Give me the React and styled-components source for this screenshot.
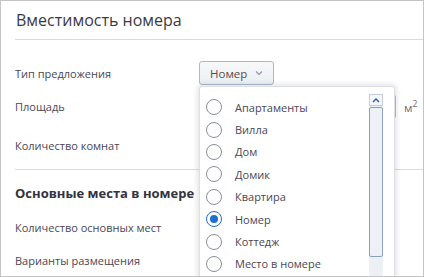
import React from "react";
import styled, { createGlobalStyle } from "styled-components";

const Global = createGlobalStyle`
  html, body { margin: 0; padding: 0; background: #fff; }
  body { font-family: "Open Sans", "Noto Sans", sans-serif; }
`;

const Frame = styled.div`
  position: relative;
  width: 424px;
  height: 277px;
  box-sizing: border-box;
  border: 1px solid #c4c4c4;
  overflow: hidden;
  background: #fff;
`;

const Header = styled.div`
  margin-left: 14px;
  height: 38px;
  display: flex;
  align-items: center;
  border-bottom: 1px solid #d3dbe3;
`;

const Title = styled.h1`
  margin: 0;
  padding-left: 1px;
  font-size: 16px;
  font-weight: 400;
  color: #3a3a44;
`;

const Body = styled.div`
  display: flex;
  flex-direction: column;
  padding-left: 14px;
  padding-top: 21px;
`;

const Row = styled.div`
  display: flex;
  align-items: center;
  box-sizing: border-box;
  height: ${(p) => p.$h}px;
  flex: none;
`;

const Label = styled.div`
  width: 184px;
  flex: none;
  font-size: 11px;
  color: #4a4656;
`;

const SelectBtn = styled.button`
  display: flex;
  align-items: center;
  gap: 8px;
  height: 24px;
  box-sizing: border-box;
  padding: 0 10px 0 10px;
  border: 1px solid #aab8cc;
  border-radius: 3px;
  background: linear-gradient(#f7f8fa, #eceff3);
  font-family: inherit;
  font-size: 11.5px;
  color: #5a4a44;
`;

const Input = styled.div`
  width: 197px;
  height: 25px;
  box-sizing: border-box;
  border: 1px solid #b8bfc8;
  border-radius: 3px;
  background: #fff;
`;

const Unit = styled.span`
  margin-left: 8px;
  font-size: 11.5px;
  color: #6a6a78;
  sup { font-size: 8.5px; }
`;

const Divider = styled.div`
  height: 1px;
  margin-top: 6px;
  background: #d3dbe3;
  flex: none;
`;

const Section = styled.div`
  font-size: 13px;
  font-weight: 700;
  color: #333340;
`;

const Dropdown = styled.div`
  position: absolute;
  left: 198px;
  top: 85px;
  width: 196px;
  height: 210px;
  box-sizing: border-box;
  background: #fff;
  border: 1px solid #dcdfe4;
  border-radius: 3px;
  box-shadow: 0 0 5px 2px rgba(0, 0, 0, 0.1);
  display: flex;
  padding: 7px 11px 0 6px;
`;

const List = styled.ul`
  list-style: none;
  margin: 0;
  padding: 2px 0 0;
  flex: 1;
`;

const Item = styled.li`
  display: flex;
  align-items: center;
  gap: 13px;
  height: 22.4px;
  font-size: 11px;
  color: #4a4656;
`;

const Radio = styled.span`
  width: 16px;
  height: 16px;
  box-sizing: border-box;
  border-radius: 50%;
  border: 1px solid ${(p) => (p.$on ? "#1f6fd0" : "#8a8e99")};
  display: flex;
  align-items: center;
  justify-content: center;
  background: #fff;
  &::after {
    content: "";
    display: ${(p) => (p.$on ? "block" : "none")};
    width: 8px;
    height: 8px;
    border-radius: 50%;
    background: #1f6fd0;
  }
`;

const Scroll = styled.div`
  width: 14px;
  display: flex;
  flex-direction: column;
  background: #eceff3;
  border-radius: 2px;
`;

const ScrollBtn = styled.div`
  height: 12px;
  display: flex;
  align-items: center;
  justify-content: center;
  box-sizing: border-box;
  border: 1px solid #c5ccd6;
  background: #f4f6f9;
`;

const Thumb = styled.div`
  margin-top: 1px;
  height: 150px;
  box-sizing: border-box;
  border: 1px solid #8aa0c2;
  border-radius: 2px;
  background: #edf0f4;
`;

const options = [
  "Апартаменты",
  "Вилла",
  "Дом",
  "Домик",
  "Квартира",
  "Номер",
  "Коттедж",
  "Место в номере",
];

export default function App() {
  return (
    <>
      <Global />
      <Frame>
        <Header>
          <Title>Вместимость номера</Title>
        </Header>
        <Body>
          <Row $h={24}>
            <Label>Тип предложения</Label>
            <SelectBtn>
              Номер
              <svg width="8" height="6" viewBox="0 0 8 6">
                <path d="M1 1.5 L4 4.5 L7 1.5" fill="none" stroke="#8a93a3" strokeWidth="1.1" />
              </svg>
            </SelectBtn>
          </Row>
          <Row $h={42}>
            <Label>Площадь</Label>
            <Input />
            <Unit>
              м<sup>2</sup>
            </Unit>
          </Row>
          <Row $h={36}>
            <Label>Количество комнат</Label>
          </Row>
          <Divider />
          <Row $h={46}>
            <Section>Основные места в номере</Section>
          </Row>
          <Row $h={22}>
            <Label>Количество основных мест</Label>
          </Row>
          <Row $h={44}>
            <Label>Варианты размещения</Label>
          </Row>
        </Body>
        <Dropdown>
          <List>
            {options.map((o) => (
              <Item key={o}>
                <Radio $on={o === "Номер"} />
                {o}
              </Item>
            ))}
          </List>
          <Scroll>
            <ScrollBtn>
              <svg width="8" height="5" viewBox="0 0 8 5">
                <path d="M1 4 L4 1 L7 4" fill="none" stroke="#2a5aa8" strokeWidth="1.4" />
              </svg>
            </ScrollBtn>
            <Thumb />
          </Scroll>
        </Dropdown>
      </Frame>
    </>
  );
}
